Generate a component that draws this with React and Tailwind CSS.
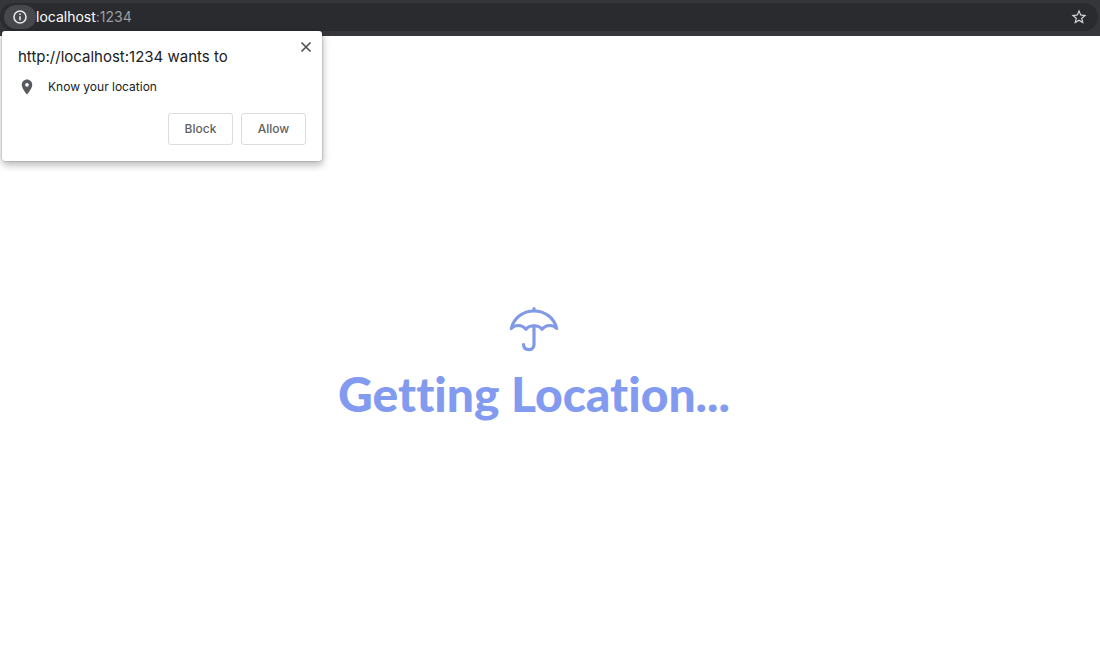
function InfoIcon() {
  return (
    <svg viewBox="0 0 16 16" className="size-4" fill="none" stroke="currentColor" aria-hidden="true">
      <circle cx="8" cy="8" r="6" strokeWidth="1.6" />
      <path d="M8 7.2v4M8 4.6v1.5" strokeWidth="1.6" />
    </svg>
  );
}

function StarIcon() {
  return (
    <svg viewBox="0 0 24 24" className="size-[18px]" fill="currentColor" aria-hidden="true">
      <path d="M22 9.24l-7.19-.62L12 2 9.19 8.63 2 9.24l5.46 4.73L5.82 21 12 17.27 18.18 21l-1.63-7.03L22 9.24zM12 15.4l-3.76 2.27 1-4.28-3.32-2.88 4.38-.38L12 6.1l1.71 4.04 4.38.38-3.32 2.88 1 4.28L12 15.4z" />
    </svg>
  );
}

function PinIcon() {
  return (
    <svg viewBox="0 0 24 24" className="size-[18px]" fill="currentColor" aria-hidden="true">
      <path d="M12 2C8.13 2 5 5.13 5 9c0 5.25 7 13 7 13s7-7.75 7-13c0-3.87-3.13-7-7-7zm0 9.5a2.5 2.5 0 1 1 0-5 2.5 2.5 0 0 1 0 5z" />
    </svg>
  );
}

function CloseIcon() {
  return (
    <svg viewBox="0 0 16 16" className="size-4" fill="none" stroke="currentColor" strokeWidth="1.6" aria-hidden="true">
      <path d="M3.5 3.5l9 9M12.5 3.5l-9 9" />
    </svg>
  );
}

function UmbrellaIcon() {
  return (
    <svg
      viewBox="0 0 50 46"
      className="h-[46px] w-[50px]"
      fill="none"
      stroke="currentColor"
      strokeWidth="3.2"
      strokeLinecap="round"
      strokeLinejoin="round"
      aria-hidden="true"
    >
      <path d="M2.3 22.500C4.800 12 13.800 5 25 5s20.200 7 22.700 17.500c-3.700-4-10.700-4.200-14.700.7-3.800-4.600-12.200-4.600-16 0-4-4.900-11-4.700-14.700-.7z" />
      <path d="M25 2.500v2" />
      <path d="M25 20v18.500c0 3.200-2.200 5.200-5.200 5.200s-5-2-5.300-5" />
    </svg>
  );
}

function AddressBar() {
  return (
    <header className="flex h-9 items-center bg-[#35363a] pb-0.5 pr-0.5">
      <div className="flex h-7 flex-1 items-center rounded-full bg-[#292b2e] pl-1 pr-2.5">
        <button type="button" aria-label="View site information" className="flex h-6 w-8 items-center justify-center rounded-full bg-[#47484c] text-[#e4e5e7]">
          <InfoIcon />
        </button>
        <span className="flex-1 text-sm text-[#9b9da1]">
          <span className="text-white">localhost</span>:1234
        </span>
        <button type="button" aria-label="Bookmark this page" className="text-[#d5d6d9]">
          <StarIcon />
        </button>
      </div>
    </header>
  );
}

function PermissionPrompt() {
  return (
    <section
      role="dialog"
      aria-labelledby="prompt-title"
      className="absolute left-0.5 top-[31px] w-80 rounded-[3px] bg-white px-4 pb-4 pt-3.5 shadow-[0_3px_8px_rgba(0,0,0,0.25),2px_6px_6px_rgba(0,0,0,0.06),0_0_2px_rgba(0,0,0,0.35)]"
    >
      <button type="button" aria-label="Close" className="absolute right-2 top-2 text-[#4b4d50]">
        <CloseIcon />
      </button>
      <h2 id="prompt-title" className="text-[15px] leading-6 text-[#202124]">
        http://localhost:1234 wants to
      </h2>
      <div className="mt-1.5 flex items-center gap-3 text-[#58595c]">
        <PinIcon />
        <p className="text-xs leading-6 text-[#202124]">Know your location</p>
      </div>
      <div className="mt-3.5 flex justify-end gap-2">
        <button type="button" className="h-8 w-[65px] rounded-[3px] border border-[#dadce0] text-xs font-medium text-[#5f6164]">
          Block
        </button>
        <button type="button" className="h-8 w-[65px] rounded-[3px] border border-[#dadce0] text-xs font-medium text-[#5f6164]">
          Allow
        </button>
      </div>
    </section>
  );
}

export default function App() {
  return (
    <div className="relative flex min-h-screen flex-col bg-white font-['Inter',sans-serif]">
      <AddressBar />
      <main className="flex flex-1 flex-col items-center justify-center gap-3 pr-8 pt-8">
        <div className="text-[#8199e6]">
          <UmbrellaIcon />
        </div>
        <h1 className="font-['Lato',sans-serif] text-5xl leading-[60px] font-black text-[#829bf0] [font-variant-ligatures:none]">
          Getting Location...
        </h1>
      </main>
      <PermissionPrompt />
    </div>
  );
}
